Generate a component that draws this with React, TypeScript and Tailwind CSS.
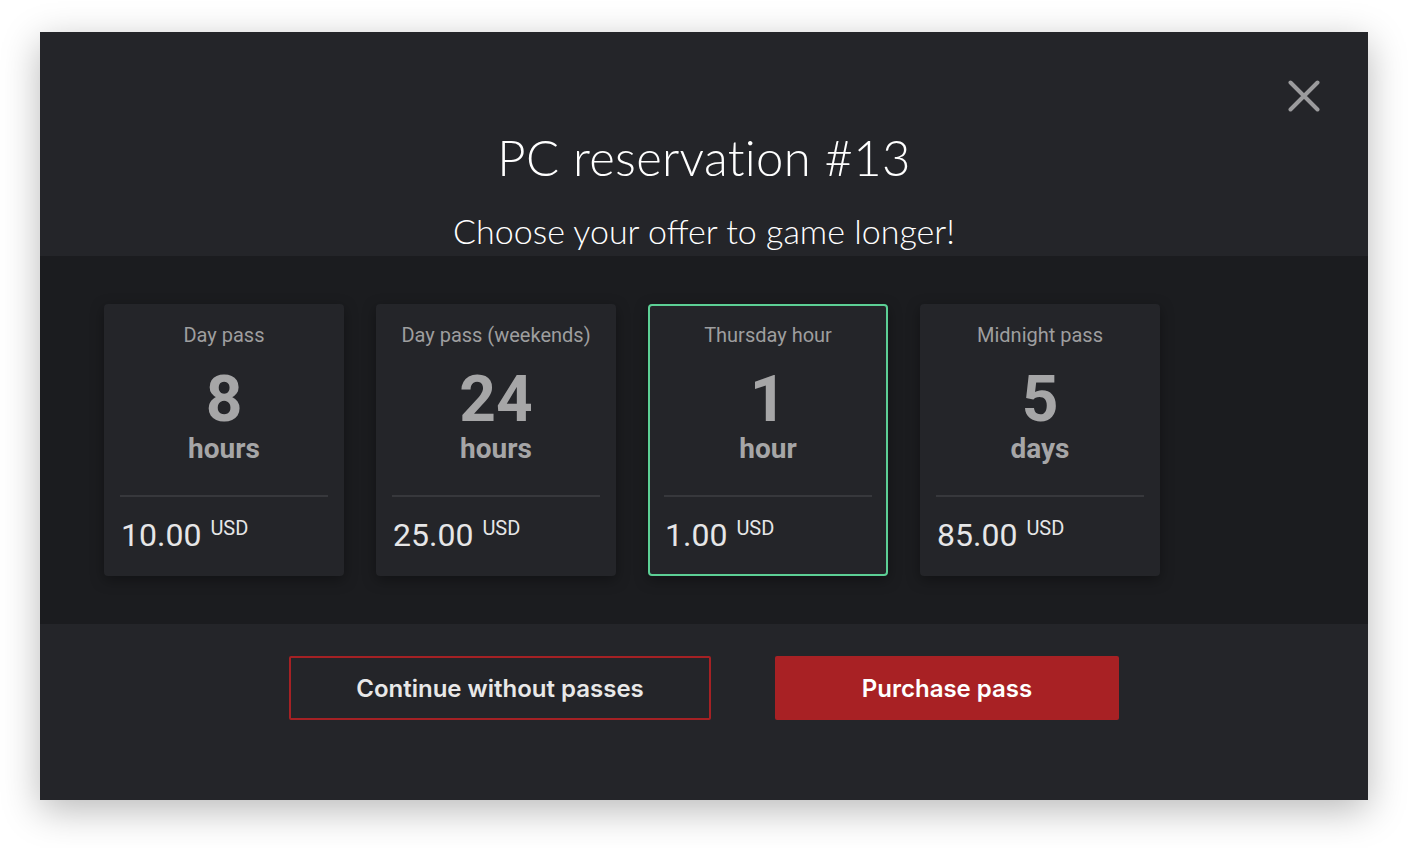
import React from "react";

type Pass = { title: string; amount: string; unit: string; price: string; selected?: boolean };

const passes: Pass[] = [
  { title: "Day pass", amount: "8", unit: "hours", price: "10.00" },
  { title: "Day pass (weekends)", amount: "24", unit: "hours", price: "25.00" },
  { title: "Thursday hour", amount: "1", unit: "hour", price: "1.00", selected: true },
  { title: "Midnight pass", amount: "5", unit: "days", price: "85.00" },
];

function PassCard({ p }: { p: Pass }) {
  return (
    <div
      className={
        "w-[240px] h-[272px] rounded-[4px] border-2 bg-[#242529] px-[14px] flex flex-col shadow-[0_4px_14px_rgba(0,0,0,0.35)] " +
        (p.selected ? "border-[#5ccf95]" : "border-transparent")
      }
      style={{ fontFamily: "Roboto, 'Liberation Sans', sans-serif" }}
    >
      <div className="pt-[15px] text-center text-[20px] leading-[28px] text-[#9e9e9f]">{p.title}</div>
      <div className="mt-[20px] text-center text-[64px] leading-[62px] font-bold text-[#a6a6a7]">{p.amount}</div>
      <div className="mt-[3px] text-center text-[28px] leading-[30px] font-bold text-[#a6a6a7]">{p.unit}</div>
      <div className="mt-[31px] h-[2px] bg-[#37383c]" />
      <div className="mt-[18px] flex items-start pl-[1px]">
        <span className="text-[32px] leading-[40px] text-[#e6e6e7]">{p.price}</span>
        <span className="ml-[9px] mt-[3px] text-[20px] leading-[20px] text-[#e6e6e7]">USD</span>
      </div>
    </div>
  );
}

export default function App() {
  return (
    <div className="w-[1408px] h-[848px] bg-white pt-[32px] pl-[40px]">
      <div className="relative w-[1328px] h-[768px] bg-[#242529] flex flex-col shadow-[0_10px_36px_rgba(0,0,0,0.28)]">
        <button className="absolute top-[48px] right-[48px] w-[32px] h-[32px]" aria-label="Close">
          <svg width="32" height="32" viewBox="0 0 32 32" fill="none">
            <path d="M2.5 2.5 L29.5 29.5 M29.5 2.5 L2.5 29.5" stroke="#9b9b9d" strokeWidth="4" strokeLinecap="round" />
          </svg>
        </button>
        <div
          className="h-[224px] flex flex-col items-center text-white"
          style={{ fontFamily: "Lato, 'Open Sans', sans-serif" }}
        >
          <h1 className="mt-[96px] text-[49px] leading-[58px] font-light tracking-[0.3px]">
            PC reservation #13
          </h1>
          <p className="mt-[25px] text-[34px] leading-[40px] font-light">Choose your offer to game longer!</p>
        </div>
        <div className="h-[368px] bg-[#1b1c1f] pl-[64px] pt-[48px] flex gap-[32px]">
          {passes.map((p) => (
            <PassCard key={p.title} p={p} />
          ))}
        </div>
        <div
          className="flex-1 flex justify-center gap-[64px] pt-[32px]"
          style={{ fontFamily: "Inter, 'Liberation Sans', sans-serif" }}
        >
          <button className="w-[422px] h-[64px] border-2 border-[#a52124] rounded-[2px] text-[24px] font-semibold text-[#e8e8e8] pt-[2px]">
            Continue without passes
          </button>
          <button className="w-[344px] h-[64px] bg-[#a82124] rounded-[2px] text-[24px] font-semibold text-white pt-[2px]">
            Purchase pass
          </button>
        </div>
      </div>
    </div>
  );
}
